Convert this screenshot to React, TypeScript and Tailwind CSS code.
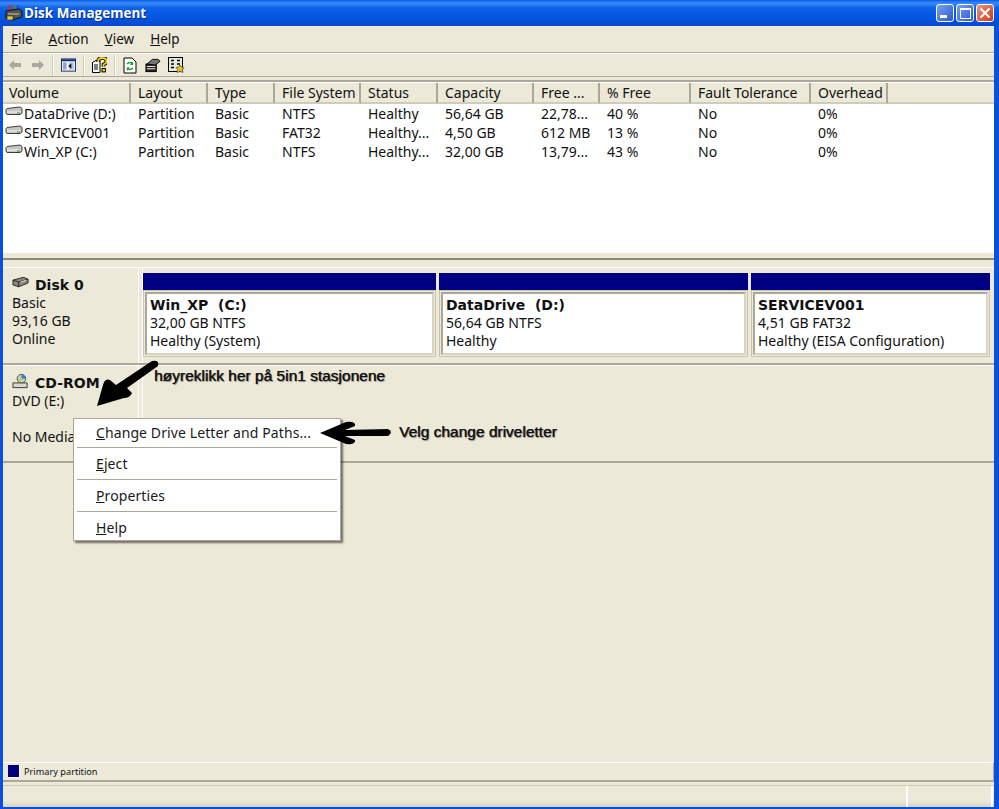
const columns = [
  { label: "Volume", width: "w-[128px]" },
  { label: "Layout", width: "w-[77px]" },
  { label: "Type", width: "w-[67px]" },
  { label: "File System", width: "w-[86px]" },
  { label: "Status", width: "w-[77px]" },
  { label: "Capacity", width: "w-[96px]" },
  { label: "Free ...", width: "w-[66px]" },
  { label: "% Free", width: "w-[91px]" },
  { label: "Fault Tolerance", width: "w-[120px]" },
  { label: "Overhead", width: "w-[77px]" },
];

const rows = [
  ["DataDrive (D:)", "Partition", "Basic", "NTFS", "Healthy", "56,64 GB", "22,78...", "40 %", "No", "0%"],
  ["SERVICEV001", "Partition", "Basic", "FAT32", "Healthy...", "4,50 GB", "612 MB", "13 %", "No", "0%"],
  ["Win_XP (C:)", "Partition", "Basic", "NTFS", "Healthy...", "32,00 GB", "13,79...", "43 %", "No", "0%"],
];

const partitions = [
  { name: "Win_XP  (C:)", size: "32,00 GB NTFS", status: "Healthy (System)", width: "w-[293px]" },
  { name: "DataDrive  (D:)", size: "56,64 GB NTFS", status: "Healthy", width: "w-[309px]" },
  { name: "SERVICEV001", size: "4,51 GB FAT32", status: "Healthy (EISA Configuration)", width: "w-[239px]" },
];

const DriveIcon = () => (
  <svg width="18" height="12" viewBox="0 0 18 12" className="shrink-0 -mt-[3px]">
    <path d="M2 2.5 L15 1 L17 2.5 V7 L15 8.5 H2 L1 7 V3.5 Z" fill="#c4c8c4" stroke="#3c3c3c" />
    <path d="M2 6 H16" stroke="#f4f4f4" />
    <path d="M12 7 H15" stroke="#30a030" />
  </svg>
);

const DiskIcon = () => (
  <svg width="17" height="14" viewBox="0 0 18 14" className="shrink-0 -mt-[4px]">
    <path d="M1 4 L12 1 L17 3 V7 L7 11 L1 9 Z" fill="#8a8a80" stroke="#222" />
    <path d="M1 4 L7 6 L17 3 M7 6 V11" fill="none" stroke="#222" />
    <path d="M9 6 L15 4" stroke="#e8e8e0" />
  </svg>
);

const CdIcon = () => (
  <svg width="17" height="16" viewBox="0 0 18 16" className="shrink-0 -mt-[4px]">
    <path d="M1 10 L16 10 V15 H1 Z" fill="#d8d8d0" stroke="#333" />
    <circle cx="10" cy="5.5" r="4.5" fill="#c8e0b0" stroke="#444" />
    <path d="M10 1 A4.5 4.5 0 0 1 14.5 5.5 H10 Z" fill="#3080d0" />
    <path d="M6 7 L10 5.5 L8 9.5 Z" fill="#e0c030" />
    <circle cx="10" cy="5.5" r="1.2" fill="#fff" stroke="#444" strokeWidth="0.5" />
  </svg>
);

const NavArrow = ({ flip }: { flip?: boolean }) => (
  <svg width="14" height="12" viewBox="0 0 14 12" className={flip ? "-scale-x-100" : ""}>
    <path d="M1 6 L6 1 V4 H13 V8 H6 V11 Z" fill="#a8a89c" />
  </svg>
);

const ToolSep = () => <div className="ml-[7px] mr-[7px] w-[2px] h-[21px] bg-[#d0ccb8] border-r border-white" />;

const ToolbarIcons = () => (
  <div className="flex items-center">
    <NavArrow />
    <div className="w-[9px]" />
    <NavArrow flip />
    <ToolSep />
    <svg width="15" height="14" viewBox="0 0 16 14">
      <rect x="0.5" y="0.5" width="15" height="13" fill="#fff" stroke="#0a246a" />
      <rect x="1" y="1" width="14" height="2" fill="#0a246a" />
      <rect x="2" y="4" width="4" height="8" fill="#8ea4d8" />
      <rect x="8" y="4" width="6" height="8" fill="#b8c4e4" />
      <path d="M11 5 L8 8 L11 11 Z" fill="#000" />
    </svg>
    <ToolSep />
    <svg width="15" height="16" viewBox="0 0 15 16">
      <path d="M0.5 5.5 L4 3.5 H8 V15.5 H0.5 Z" fill="#fff" stroke="#000" />
      <path d="M2 8 H6 M2 10 H6 M2 12 H6" stroke="#000" />
      <path d="M6 5 Q6 1 10 1 Q14.5 1 14.5 4.5 Q14.5 6.5 11.5 7.5 V9.5" fill="none" stroke="#000" strokeWidth="3.6" />
      <path d="M6 5 Q6 1 10 1 Q14.5 1 14.5 4.5 Q14.5 6.5 11.5 7.5 V9.5" fill="none" stroke="#f8d800" strokeWidth="1.8" />
      <rect x="10" y="11.5" width="3.4" height="3.4" fill="#f8d800" stroke="#000" />
    </svg>
    <ToolSep />
    <svg width="14" height="17" viewBox="0 0 14 17">
      <path d="M1 1 H9 L13 5 V16 H1 Z" fill="#fff" stroke="#000" />
      <path d="M4 7 Q7 4 10 7 M10 11 Q7 14 4 11" fill="none" stroke="#10a020" strokeWidth="1.6" />
      <path d="M10 4.5 V8 H7 Z M4 14 V10.5 H7 Z" fill="#10a020" />
    </svg>
    <svg width="16" height="15" viewBox="0 0 17 15" className="ml-[8px]">
      <rect x="1" y="6" width="11" height="8" fill="#222" stroke="#000" />
      <path d="M2 8.5 H11 M2 11 H11" stroke="#fff" />
      <path d="M2 6 L8 1 H14 L16 3 L11 7 Z" fill="#777" stroke="#000" />
    </svg>
    <svg width="17" height="17" viewBox="0 0 17 17" className="ml-[7px]">
      <rect x="0.5" y="0.5" width="14" height="14" fill="#e8e8e0" stroke="#000" />
      <path d="M3 3.5 H6 M9 3.5 H12 M3 7 H6 M9 7 H12 M3 10.5 H6" stroke="#000" strokeWidth="1.6" />
      <path d="M12 8 L13.5 10 L16 10.5 L14.5 12.5 L15 15.5 L12 14.5 L9 15.5 L9.5 12.5 L8 10.5 L10.5 10 Z" fill="#e8c020" stroke="#333" strokeWidth="0.6" />
    </svg>
  </div>
);

const AppIcon = () => (
  <svg width="18" height="18" viewBox="0 0 18 18" className="shrink-0">
    <path d="M4 1 V6 M7 1 V6" stroke="#d03020" strokeWidth="1.4" />
    <path d="M10 1 V6" stroke="#20a040" strokeWidth="1.4" />
    <path d="M13 1 V6" stroke="#2040c0" strokeWidth="1.4" />
    <path d="M1 7 L14 5 L17 7 V13 L7 16 L1 14 Z" fill="#55554c" stroke="#111" />
    <path d="M3 10 H14" stroke="#c8c8bc" />
    <rect x="2" y="12" width="6" height="4" fill="#e8c840" stroke="#222" strokeWidth="0.6" />
  </svg>
);

const MenuItem = ({ letter, rest, className }: { letter: string; rest: string; className: string }) => (
  <div className={`flex items-center pl-[22px] text-[14px] tracking-[0.1px] text-[#1a1a1a] ${className}`}>
    <span>
      <u>{letter}</u>
      {rest}
    </span>
  </div>
);

const Separator = () => <div className="mx-[3px] h-px bg-[#aca899]" />;

export default function App() {
  return (
    <div className="relative w-[999px] h-[809px] overflow-hidden flex flex-col bg-[#0a50e0] font-['Noto_Sans',sans-serif] text-[14px] text-[#111]">
      {/* title bar */}
      <div className="h-[26px] shrink-0 flex items-center pl-[5px] pr-[5px] bg-[linear-gradient(180deg,#0a5ae8_0%,#3a8cf8_12%,#0f62ea_30%,#0253dd_70%,#0a4ad0_100%)]">
        <AppIcon />
        <span className="ml-px pt-px text-white font-bold text-[13.5px] font-['Open_Sans',sans-serif] [text-shadow:1px_1px_0_#0a2a80]">
          Disk Management
        </span>
        <div className="ml-auto flex gap-[2px]">
          <div className="w-[18px] h-[18px] rounded-[3px] border border-white bg-[linear-gradient(135deg,#7aa0f0,#2a58d8)] flex items-end pl-[3px] pb-[3px]">
            <div className="w-[7px] h-[3px] bg-white" />
          </div>
          <div className="w-[18px] h-[18px] rounded-[3px] border border-white bg-[linear-gradient(135deg,#7aa0f0,#2a58d8)] flex items-center justify-center">
            <div className="w-[11px] h-[11px] border border-white border-t-2" />
          </div>
          <div className="w-[18px] h-[18px] rounded-[3px] border border-white bg-[linear-gradient(135deg,#e89a80,#c83a14)] flex items-center justify-center">
            <svg width="12" height="12" viewBox="0 0 12 12">
              <path d="M1.5 1.5 L10.5 10.5 M10.5 1.5 L1.5 10.5" stroke="#fff" strokeWidth="2" />
            </svg>
          </div>
        </div>
      </div>

      <div className="flex-1 mx-[3px] mr-[5px] mb-[2px] flex flex-col bg-[#ece9d8] min-h-0">
        {/* menu bar */}
        <div className="h-[27px] shrink-0 flex items-center pl-[8px] gap-[16px] border-b border-[#aca899] text-[13.5px]">
          <span><u>F</u>ile</span>
          <span><u>A</u>ction</span>
          <span><u>V</u>iew</span>
          <span><u>H</u>elp</span>
        </div>
        {/* toolbar */}
        <div className="h-[24px] shrink-0 flex items-center pl-[5px] border-t border-white border-b-[#aca899] border-b">
          <ToolbarIcons />
        </div>

        {/* volume list */}
        <div className="mt-[3px] h-[173px] shrink-0 flex flex-col bg-white border-t-2 border-[#aca899]">
          <div className="h-[22px] shrink-0 flex bg-[#ece9d8] border-t border-white">
            {columns.map((col, i) => (
              <div
                key={col.label}
                className={`${col.width} shrink-0 ${i === 0 ? "pl-[6px]" : "pl-[7px]"} flex items-center border-r-2 border-r-[#aca899] border-b-2 border-b-[#d0ccb8] whitespace-nowrap overflow-hidden`}
              >
                {col.label}
              </div>
            ))}
            <div className="flex-1 border-b-2 border-b-[#d0ccb8]" />
          </div>
          {rows.map((row) => (
            <div key={row[0]} className="h-[19px] shrink-0 flex items-center">
              {row.map((cell, i) => (
                <div
                  key={i}
                  className={`${columns[i].width} shrink-0 whitespace-nowrap overflow-hidden flex items-center ${i === 0 ? "pl-[2px] gap-px" : "pl-[7px]"}`}
                >
                  {i === 0 && <DriveIcon />}
                  {cell}
                </div>
              ))}
            </div>
          ))}
        </div>

        {/* splitter */}
        <div className="h-[7px] shrink-0 border-b-2 border-[#8c8a7c]" />

        {/* graphical view */}
        <div className="mt-[7px] flex flex-col border-t border-white">
          <div className="h-[97px] flex border-b-2 border-[#aca899]">
            <div className="w-[136px] shrink-0 pl-[9px] pt-[8px] border-r border-white leading-[18px]">
              <div className="flex items-center gap-[6px] font-bold font-['DejaVu_Sans',sans-serif]">
                <DiskIcon />
                <span>Disk 0</span>
              </div>
              <div>Basic</div>
              <div>93,16 GB</div>
              <div>Online</div>
            </div>
            <div className="ml-[3px] pt-[5px] flex gap-[3px] border-l border-white">
              {partitions.map((p) => (
                <div key={p.name} className={`${p.width} flex flex-col`}>
                  <div className="h-[17px] bg-[#000080]" />
                  <div className="h-[67px] p-px border border-[#c8c4b0]">
                    <div className="h-full bg-white border-2 border-[#d8d4c4] border-t-[#aca899] border-l-[#aca899] pl-[3px] pt-[2px] leading-[18px] whitespace-nowrap">
                      <div className="font-bold whitespace-pre font-['DejaVu_Sans',sans-serif]">{p.name}</div>
                      <div>{p.size}</div>
                      <div>{p.status}</div>
                    </div>
                  </div>
                </div>
              ))}
            </div>
          </div>
          <div className="h-[98px] flex border-t border-white border-b-2 border-b-[#aca899]">
            <div className="w-[136px] shrink-0 pl-[9px] pt-[8px] border-r border-white leading-[18px]">
              <div className="flex items-center gap-[6px] font-bold font-['DejaVu_Sans',sans-serif]">
                <CdIcon />
                <span>CD-ROM</span>
              </div>
              <div>DVD (E:)</div>
              <div className="mt-[18px]">No Media</div>
            </div>
            <div className="ml-[3px] border-l border-white" />
          </div>
        </div>

        <div className="flex-1" />

        {/* legend */}
        <div className="h-[20px] shrink-0 flex items-center gap-[4px] pl-[5px] text-[9.2px] border-t border-white border-b-2 border-r border-b-[#aca899] border-r-[#aca899]">
          <div className="w-[12px] h-[13px] bg-[#000080] border-r border-b border-white" />
          <span>Primary partition</span>
        </div>

        {/* status bar */}
        <div className="mt-[3px] h-[22px] shrink-0 flex justify-end border-t border-[#d0ccb8] bg-[linear-gradient(180deg,#ece9d8_70%,#d8d4c0_100%)]">
          <div className="w-[87px] mr-px border-l-2 border-r-2 border-white" />
        </div>
      </div>

      {/* context menu */}
      <div className="absolute left-[73px] top-[418px] w-[268px] bg-white border border-[#aca899] shadow-[2px_2px_2px_rgba(0,0,0,0.55)] flex flex-col">
        <MenuItem letter="C" rest="hange Drive Letter and Paths..." className="h-[28px] pb-px" />
        <Separator />
        <MenuItem letter="E" rest="ject" className="h-[31px]" />
        <Separator />
        <MenuItem letter="P" rest="roperties" className="h-[31px]" />
        <Separator />
        <MenuItem letter="H" rest="elp" className="h-[28px] pt-[3px]" />
      </div>

      {/* annotations */}
      <svg className="absolute left-[90px] top-[355px]" width="80" height="60" viewBox="90 355 80 60">
        <path d="M152 361 Q160 360 158 366 L127 388 L132 393 Q130 398 124 398 L97 406 L103 385 Q105 378 110 380 L116 385 Z" fill="#000" />
      </svg>
      <span className="absolute left-[154px] top-[367px] font-['Liberation_Sans',sans-serif] text-[15.5px] leading-[18px] text-[#111] [text-shadow:0.5px_0_0_#333,1px_1px_1px_#888] whitespace-nowrap">
        høyreklikk her på 5in1 stasjonene
      </span>
      <svg className="absolute left-[315px] top-[415px]" width="80" height="34" viewBox="315 415 80 34">
        <path d="M320 433 L346 422 Q356 421 355 426 L345 430 L388 429 Q394 432 388 436 L345 436 L355 440 Q356 445 346 444 Z" fill="#000" />
      </svg>
      <span className="absolute left-[399px] top-[423px] font-['Liberation_Sans',sans-serif] text-[15.5px] leading-[18px] text-[#111] [text-shadow:0.5px_0_0_#333,1px_1px_1px_#888] whitespace-nowrap">
        Velg change driveletter
      </span>
    </div>
  );
}
